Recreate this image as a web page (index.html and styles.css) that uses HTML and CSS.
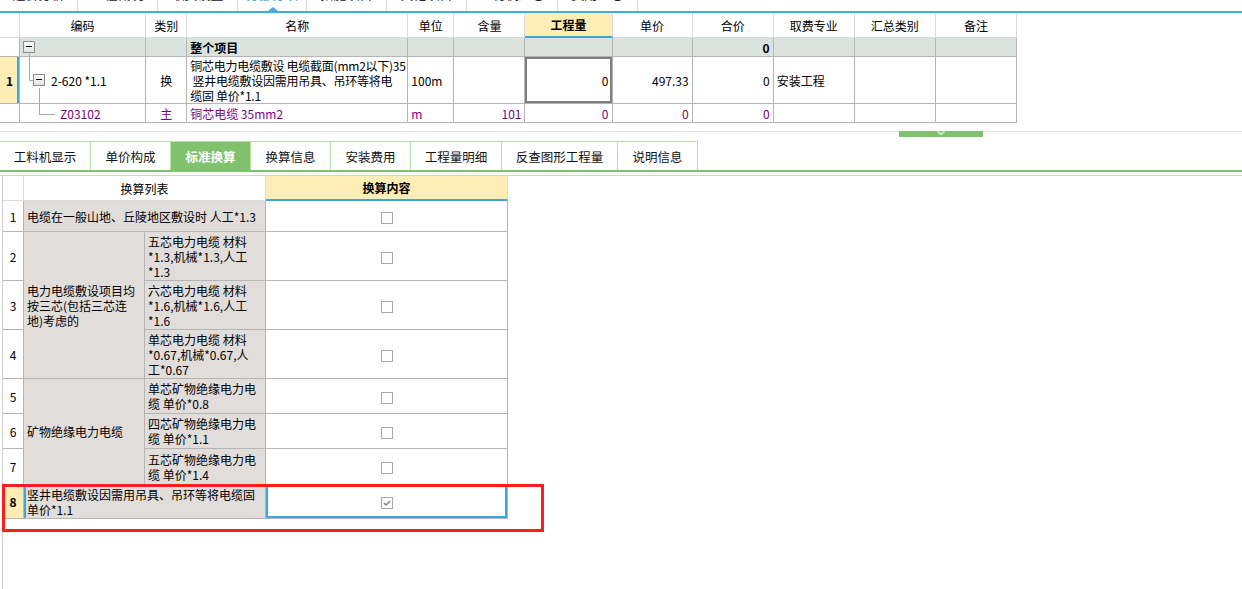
FILE: index.html
```html
<!DOCTYPE html>
<html lang="zh-CN">

<head>
  <meta charset="UTF-8">
  <title>标准换算</title>
  <link rel="stylesheet" href="styles.css">
</head>

<body>
  <nav class="topnav">
    <a class="topnav-item w78">造价分析</a>
    <a class="topnav-item">工程概况</a>
    <a class="topnav-item">取费设置</a>
    <a class="topnav-item w69 active">分部分项</a>
    <a class="topnav-item">措施项目</a>
    <a class="topnav-item">其他项目</a>
    <a class="topnav-item w91">人材机汇总</a>
    <a class="topnav-item">费用汇总</a>
  </nav>

  <table class="grid main-grid">
    <colgroup>
      <col style="width:20px"><col style="width:126px"><col style="width:41px"><col style="width:221px">
      <col style="width:46px"><col style="width:71px"><col style="width:87px"><col style="width:80px">
      <col style="width:81px"><col style="width:81px"><col style="width:81px"><col style="width:81px">
    </colgroup>
    <thead>
      <tr>
        <th></th>
        <th>编码</th>
        <th>类别</th>
        <th>名称</th>
        <th>单位</th>
        <th>含量</th>
        <th class="current">工程量</th>
        <th>单价</th>
        <th>合价</th>
        <th>取费专业</th>
        <th>汇总类别</th>
        <th>备注</th>
      </tr>
    </thead>
    <tbody>
      <tr class="row-group">
        <td class="rowhead"></td>
        <td class="tree">
          <div class="tree-node lvl0"><span class="toggle"></span></div>
          <span class="branch b-group"></span>
        </td>
        <td></td>
        <td class="strong">整个项目</td>
        <td></td>
        <td></td>
        <td></td>
        <td></td>
        <td class="num strong">0</td>
        <td></td>
        <td></td>
        <td></td>
      </tr>
      <tr class="row-item">
        <td class="rowhead selected">1</td>
        <td class="tree">
          <span class="branch b-in"></span>
          <div class="tree-node lvl1"><span class="toggle"></span><span>2-620 *1.1</span></div>
          <span class="branch b-out"></span>
        </td>
        <td class="center">换</td>
        <td class="name">铜芯电力电缆敷设 电缆截面(mm2以下)35<br>&nbsp;竖井电缆敷设因需用吊具、吊环等将电<br>缆固 单价*1.1</td>
        <td>100m</td>
        <td></td>
        <td class="num focus">0</td>
        <td class="num">497.33</td>
        <td class="num">0</td>
        <td>安装工程</td>
        <td></td>
        <td></td>
      </tr>
      <tr class="row-sub">
        <td class="rowhead"></td>
        <td class="tree">
          <span class="branch b-leaf"></span>
          <div class="tree-node lvl2">Z03102</div>
        </td>
        <td class="center">主</td>
        <td>铜芯电缆 35mm2</td>
        <td>m</td>
        <td class="num">101</td>
        <td class="num">0</td>
        <td class="num">0</td>
        <td class="num">0</td>
        <td></td>
        <td></td>
        <td></td>
      </tr>
    </tbody>
  </table>

  <div class="splitter">
    <span class="splitter-handle">
      <svg width="12" height="6" viewBox="0 0 12 6"><path d="M2 0.5 L6 4 L10 0.5 M3.5 0.5 L6 2.5 L8.5 0.5" fill="none" stroke="#e4f3dc" stroke-width="1"/></svg>
    </span>
  </div>

  <nav class="tabs">
    <a class="tab w91">工料机显示</a>
    <a class="tab">单价构成</a>
    <a class="tab active">标准换算</a>
    <a class="tab">换算信息</a>
    <a class="tab">安装费用</a>
    <a class="tab w91">工程量明细</a>
    <a class="tab w116">反查图形工程量</a>
    <a class="tab">说明信息</a>
  </nav>

  <section class="calc">
    <div class="calc-holder">
      <table class="grid calc-grid">
        <colgroup>
          <col style="width:21px"><col style="width:121px"><col style="width:121px"><col style="width:242px">
        </colgroup>
        <thead>
          <tr>
            <th></th>
            <th colspan="2">换算列表</th>
            <th class="current">换算内容</th>
          </tr>
        </thead>
        <tbody>
          <tr class="h31">
            <td class="rowno">1</td>
            <td class="label" colspan="2">电缆在一般山地、丘陵地区敷设时 人工*1.3</td>
            <td class="check"><span class="box"></span></td>
          </tr>
          <tr class="h49">
            <td class="rowno">2</td>
            <td class="label" rowspan="3">电力电缆敷设项目均<br>按三芯(包括三芯连<br>地)考虑的</td>
            <td class="label">五芯电力电缆 材料<br>*1.3,机械*1.3,人工<br>*1.3</td>
            <td class="check"><span class="box"></span></td>
          </tr>
          <tr class="h49">
            <td class="rowno">3</td>
            <td class="label">六芯电力电缆 材料<br>*1.6,机械*1.6,人工<br>*1.6</td>
            <td class="check"><span class="box"></span></td>
          </tr>
          <tr class="h49">
            <td class="rowno">4</td>
            <td class="label">单芯电力电缆 材料<br>*0.67,机械*0.67,人<br>工*0.67</td>
            <td class="check"><span class="box"></span></td>
          </tr>
          <tr class="h35">
            <td class="rowno">5</td>
            <td class="label" rowspan="3">矿物绝缘电力电缆</td>
            <td class="label">单芯矿物绝缘电力电<br>缆 单价*0.8</td>
            <td class="check"><span class="box"></span></td>
          </tr>
          <tr class="h35">
            <td class="rowno">6</td>
            <td class="label">四芯矿物绝缘电力电<br>缆 单价*1.1</td>
            <td class="check"><span class="box"></span></td>
          </tr>
          <tr class="h36">
            <td class="rowno">7</td>
            <td class="label">五芯矿物绝缘电力电<br>缆 单价*1.4</td>
            <td class="check"><span class="box"></span></td>
          </tr>
          <tr class="h34 selected-row">
            <td class="rowno selected">8</td>
            <td class="label marked" colspan="2">竖井电缆敷设因需用吊具、吊环等将电缆固<br>单价*1.1</td>
            <td class="check focus">
              <span class="box checked">
                <svg width="10" height="10" viewBox="0 0 10 10"><path d="M2 5 L4 7 L8 3" fill="none" stroke="#7a7a7a" stroke-width="1.4"/></svg>
              </span>
            </td>
          </tr>
        </tbody>
      </table>
    </div>
    <div class="highlight"></div>
  </section>
</body>

</html>
```

FILE: styles.css
```css
body {
  margin: 0;
  width: 1242px;
  height: 589px;
  overflow: hidden;
  background: #fff;
  color: #000;
  font: 12px/15px "Noto Sans CJK SC", sans-serif;
}

/* top module tabs, mostly scrolled out of view */
.topnav {
  display: flex;
  height: 11px;
  overflow: hidden;
  border-bottom: 2px solid #3eaee0;
}

.topnav-item {
  position: relative;
  display: block;
  width: 79px;
  height: 24px;
  margin-top: -13px;
  border-right: 1px solid #d9d9d9;
  text-align: center;
  line-height: 13px;
  font-size: 13px;
  color: #222;
}

.topnav-item.w78 { width: 77px; }
.topnav-item.w69 { width: 68px; }
.topnav-item.w91 { width: 90px; }

.topnav-item.active {
  color: #2ea8e0;
  font-weight: 700;
}

.topnav-item.active::after {
  content: "";
  position: absolute;
  left: 30px;
  bottom: 0;
  border: 5px solid transparent;
  border-bottom: 4px solid #3eaee0;
  border-top: 0;
}

/* grids */
.grid {
  border-collapse: separate;
  border-spacing: 0;
  table-layout: fixed;
}

.grid th,
.grid td {
  box-sizing: border-box;
  padding: 0 3px;
  border-right: 1px solid #b5b5b5;
  border-bottom: 1px solid #b5b5b5;
  white-space: nowrap;
  overflow: hidden;
  vertical-align: middle;
  text-align: left;
  font-weight: 400;
}

.grid th {
  text-align: center;
  border-color: #dadada;
  background: #fff;
}

.grid th.current {
  background: #feedb5;
  font-weight: 700;
  border-bottom: 2px solid #3aa8da;
}

.main-grid {
  width: 1017px;
}

.main-grid thead th { height: 25px; }
.row-group td { height: 19px; background: #dbe3df; }
.row-item td { height: 47px; }
.row-sub td { height: 19px; color: #800080; }

.main-grid td.rowhead {
  background: #fff;
  text-align: center;
  font-weight: 700;
  padding: 0;
}

.main-grid td.rowhead.selected {
  background: #feedb5;
  box-shadow: inset -2px 0 0 #3aa8da;
}

.grid td.strong { font-weight: 700; }
.grid td.num { text-align: right; }
.grid td.center { text-align: center; }

.grid td.name {
  line-height: 15px;
  letter-spacing: -0.25px;
}

.main-grid td.focus {
  box-shadow: inset 0 0 0 2px #808080;
}

/* tree column */
.grid td.tree {
  position: relative;
  padding: 0;
  overflow: visible;
}

.tree-node {
  display: flex;
  align-items: center;
  gap: 6px;
}

.tree-node.lvl0 { padding-left: 3px; }
.tree-node.lvl1 { padding-left: 13px; }
.tree-node.lvl2 { padding-left: 40px; }

.toggle {
  position: relative;
  box-sizing: border-box;
  width: 12px;
  height: 12px;
  border: 1px solid #8c8c8c;
  background: linear-gradient(#fdfdfd, #e3e3e3);
}

.toggle::after {
  content: "";
  position: absolute;
  left: 2px;
  right: 2px;
  top: 4px;
  height: 1px;
  background: #111;
}

.branch {
  position: absolute;
  border-color: #a9a9a9;
  border-style: solid;
  border-width: 0;
}

.b-group {
  left: 9px;
  top: 16px;
  bottom: -1px;
  border-left-width: 1px;
}

.b-in {
  left: 9px;
  top: 0;
  width: 4px;
  height: 23px;
  border-left-width: 1px;
  border-bottom-width: 1px;
}

.b-out {
  left: 19px;
  top: 31px;
  bottom: -1px;
  border-left-width: 1px;
}

.b-leaf {
  left: 19px;
  top: 0;
  width: 15px;
  height: 10px;
  border-left-width: 1px;
  border-bottom-width: 1px;
}

/* splitter */
.splitter {
  display: flex;
  height: 6px;
  margin-top: 8px;
  border-top: 1px solid #e0e0e0;
}

.splitter-handle {
  display: flex;
  justify-content: center;
  width: 84px;
  height: 6px;
  margin: -1px 0 0 899px;
  background: #80c26b;
}

/* detail tabs */
.tabs {
  display: flex;
  height: 29px;
  margin-top: 3px;
  border-bottom: 2px solid #80c26b;
}

.tab {
  display: block;
  width: 79px;
  border-top: 1px solid #b6e2a2;
  border-right: 1px solid #b6e2a2;
  text-align: center;
  line-height: 30px;
  font-size: 12.5px;
  color: #111;
}

.tab.w91 { width: 90px; }
.tab.w116 { width: 115px; }

.tab.active {
  background: #80c26b;
  color: #fff;
  font-weight: 700;
}

/* standard conversion grid */
.calc {
  position: relative;
  height: 415px;
  margin-top: 3px;
  border-top: 1px solid #d4d4d4;
}

.calc-holder {
  height: 100%;
  margin-left: 2px;
  border-left: 1px solid #cfcfcf;
}

.calc-grid {
  width: 505px;
}

.calc-grid thead th { height: 25px; }
.calc-grid thead th.current { border-bottom-width: 2px; }

.h31 td { height: 31px; }
.h49 td { height: 49px; }
.h35 td { height: 35px; }
.h36 td { height: 36px; }
.h34 td { height: 34px; }

.calc-grid td.rowno {
  padding: 0;
  text-align: center;
}

.calc-grid td.rowno.selected {
  background: #feedb5;
  font-weight: 700;
}

.calc-grid td.label {
  background: #e0dddb;
  line-height: 15px;
}

.calc-grid td.label.marked {
  box-shadow: inset 2px 0 0 #3aa8da;
}

.calc-grid td.check {
  text-align: center;
  padding: 0;
}

.calc-grid td.check.focus {
  box-shadow: inset 0 0 0 2px #3aa8da;
}

.box {
  display: inline-flex;
  align-items: center;
  justify-content: center;
  box-sizing: border-box;
  width: 12px;
  height: 12px;
  border: 1px solid #a8a8a8;
  background: #fff;
  vertical-align: middle;
}

.highlight {
  position: absolute;
  left: 2px;
  top: 308px;
  width: 542px;
  height: 48px;
  box-sizing: border-box;
  border: 3px solid #ff1e1e;
}
```
